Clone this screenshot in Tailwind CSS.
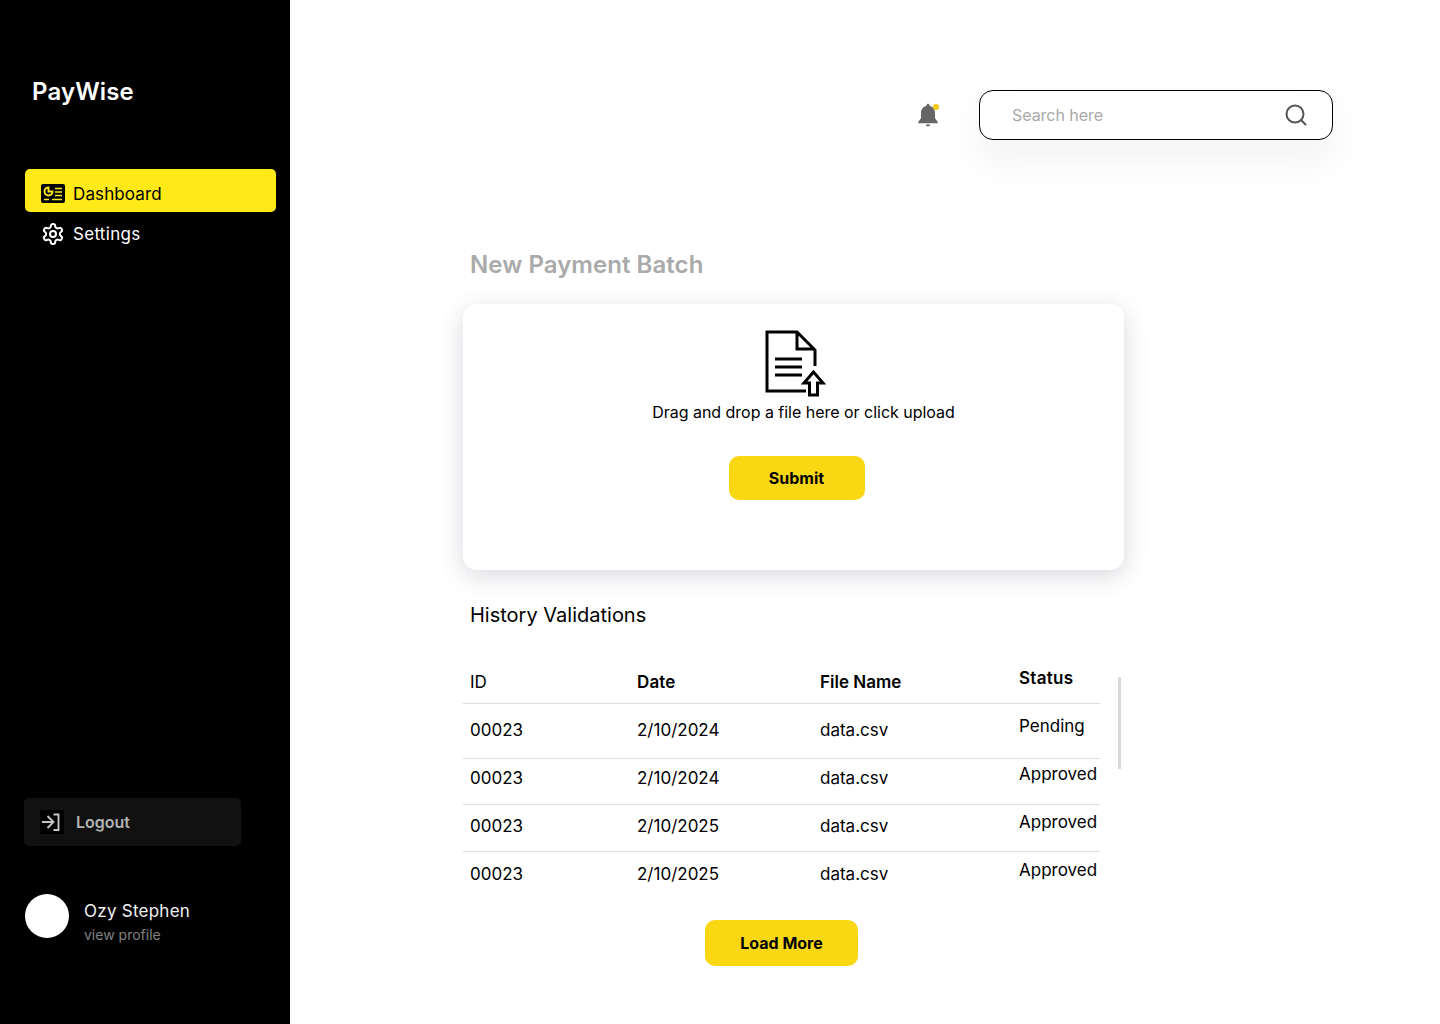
<!DOCTYPE html>
<html lang="en">
<head>
  <meta charset="UTF-8" />
  <title>PayWise | Dashboard</title>
  <script src="https://cdn.jsdelivr.net/npm/@tailwindcss/browser@4"></script>
</head>
<body class="bg-white font-['Inter',sans-serif] text-black">
<div class="flex h-[1024px] w-[1440px] overflow-hidden">

  <!-- Sidebar -->
  <aside class="w-[290px] shrink-0 bg-black flex flex-col text-white">
    <div class="pl-8 pt-[77px] h-[169px] text-2xl leading-[30px] font-semibold tracking-[0.15px]">PayWise</div>
    <nav class="pl-[25px] pr-[14px]">
      <a href="#" class="h-[43px] rounded-[5px] bg-[#ffe916] text-black flex items-center pl-4 gap-2 text-[17px] tracking-[0.12px]">
        <svg class="w-6 h-[19px] mt-[6px]" viewBox="0 0 24 19"><rect width="24" height="19" rx="2" fill="#000"/><path d="M7.500 3.500a4 4 0 1 0 4 4h-4z" fill="none" stroke="#ffe916" stroke-width="1.900"/><path d="M14 4.500h7M14 8h7M14 11.500h7M3 15.500h5M11 15.500h10" stroke="#ffe916" stroke-width="1.700" fill="none"/></svg>
        <span class="mt-[9px]">Dashboard</span>
      </a>
      <a href="#" class="h-[44px] flex items-center pl-4 gap-2 text-[17px] tracking-[0.3px]">
        <svg class="w-6 h-6" viewBox="0 0 24 24" fill="none" stroke="#fff" stroke-width="2" stroke-linecap="round" stroke-linejoin="round"><path d="M12.220 2h-.44a2 2 0 0 0-2 2v.18a2 2 0 0 1-1 1.730l-.43.25a2 2 0 0 1-2 0l-.15-.08a2 2 0 0 0-2.730.73l-.22.38a2 2 0 0 0 .73 2.730l.15.1a2 2 0 0 1 1 1.720v.51a2 2 0 0 1-1 1.740l-.15.09a2 2 0 0 0-.73 2.730l.22.38a2 2 0 0 0 2.730.73l.15-.08a2 2 0 0 1 2 0l.43.25a2 2 0 0 1 1 1.730V20a2 2 0 0 0 2 2h.44a2 2 0 0 0 2-2v-.18a2 2 0 0 1 1-1.730l.43-.25a2 2 0 0 1 2 0l.15.08a2 2 0 0 0 2.730-.73l.22-.39a2 2 0 0 0-.73-2.730l-.15-.08a2 2 0 0 1-1-1.740v-.5a2 2 0 0 1 1-1.740l.15-.09a2 2 0 0 0 .73-2.730l-.22-.38a2 2 0 0 0-2.730-.73l-.15.08a2 2 0 0 1-2 0l-.43-.25a2 2 0 0 1-1-1.730V4a2 2 0 0 0-2-2z"/><circle cx="12" cy="12" r="3"/></svg>
        <span class="mt-[2px]">Settings</span>
      </a>
    </nav>

    <div class="mt-auto pl-6 pb-[86px]">
      <a href="#" class="w-[217px] h-12 rounded-[5px] bg-[#111111] flex items-center pl-4 gap-3 text-[#b3b3b3] text-base font-semibold">
        <span class="w-6 h-6 bg-black">
          <svg class="w-6 h-6" viewBox="0 0 24 24" fill="none" stroke="#c4c4c4" stroke-width="1.900"><path d="M2 12h11.500M7.500 6l6 6-6 6M13.500 4.500h5v15.500h-5"/></svg>
        </span>
        Logout
      </a>
      <div class="mt-[48px] h-11 flex items-start pl-px">
        <div class="w-11 h-11 rounded-full bg-white"></div>
        <div class="ml-[15px] mt-[6px]">
          <div class="text-[17px] leading-[22px] tracking-[0.25px] text-[#f2f2f2]">Ozy Stephen</div>
          <div class="mt-[3px] text-sm leading-5 text-[#808080]">view profile</div>
        </div>
      </div>
    </div>
  </aside>

  <!-- Main -->
  <main class="flex-1 pl-[173px]">
    <!-- Top bar -->
    <div class="pt-[90px] flex items-center justify-end pr-[107px]">
      <div class="relative mr-[38px] w-[26px] h-[26px]">
        <svg class="w-[26px] h-[26px]" viewBox="0 0 24 24" fill="#666666"><path d="M12 1.500c-.8 0-1.400.6-1.400 1.400v.6C7.400 4.200 5.500 7 5.500 10.200v4.800L3 18.500v1.200h18v-1.200L18.500 15v-4.800c0-3.200-1.900-6-5.100-6.700v-.6c0-.8-.6-1.400-1.400-1.400zM10 20.700c0 1 .9 1.800 2 1.800s2-.8 2-1.800z"/></svg>
        <span class="absolute right-[2px] top-[2px] w-[6px] h-[6px] rounded-full bg-[#f5c70a]"></span>
      </div>
      <div class="w-[354px] h-[50px] rounded-[14px] border border-black bg-white flex items-center justify-between pl-[32px] pr-[25px] shadow-[0_20px_40px_rgba(60,40,70,0.06)]">
        <span class="text-base tracking-[-0.05px] text-[#a9a9a9]">Search here</span>
        <svg class="w-[22px] h-[22px]" viewBox="0 0 22 22" fill="none" stroke="#555555" stroke-width="2" stroke-linecap="round"><circle cx="10" cy="10" r="8.500"/><path d="M16.500 16.500l4 4"/></svg>
      </div>
    </div>

    <h1 class="mt-[109px] pl-[7px] text-2xl leading-8 font-semibold tracking-[0.05px] text-[#aaaaaa]">New Payment Batch</h1>

    <!-- Upload card -->
    <section class="mt-[23px] w-[661px] h-[266px] rounded-[14px] bg-white shadow-[0_6px_24px_rgba(60,70,90,0.2)] flex flex-col items-center pt-[26px]">
      <svg class="ml-[3px] w-[62px] h-[68px]" viewBox="0 0 62 68" fill="none" stroke="#000" stroke-width="3">
        <path d="M51 36V20L33 2H3v59h39M33 2v17h18M11 29h27M11 37h27M11 45h27"/>
        <path d="M49.500 42L40 53h5.500v12h8V53H59z"/>
      </svg>
      <p class="ml-5 mt-[2px] text-base tracking-[-0.02px] leading-6">Drag and drop a file here or click upload</p>
      <button class="mt-[32px] w-[136px] h-11 mr-[-6px] rounded-[10px] bg-[#f9d713] text-base font-bold">Submit</button>
    </section>

    <h2 class="mt-[31px] pl-[7px] text-xl leading-7 font-normal">History Validations</h2>

    <!-- Table -->
    <div class="relative w-[637px] mt-[31px] text-[17px]">
      <div class="grid grid-cols-[167px_183px_199px_1fr] pl-[7px] h-[44px] items-center border-b border-[#dddddd]">
        <div class="mt-[2px]">ID</div>
        <div class="mt-[2px] font-semibold tracking-[0.1px]">Date</div>
        <div class="mt-[2px] font-semibold">File Name</div>
        <div class="mt-[-6px] font-semibold tracking-[0.3px]">Status</div>
      </div>
      <div class="grid grid-cols-[167px_183px_199px_1fr] pl-[7px] h-[55px] items-center border-b border-[#dddddd]">
        <div>00023</div><div>2/10/2024</div><div>data.csv</div><div class="mt-[-8px]">Pending</div>
      </div>
      <div class="grid grid-cols-[167px_183px_199px_1fr] pl-[7px] h-[46px] items-center border-b border-[#dddddd]">
        <div class="mt-[-6px]">00023</div><div class="mt-[-6px]">2/10/2024</div><div class="mt-[-6px]">data.csv</div><div class="mt-[-14px]">Approved</div>
      </div>
      <div class="grid grid-cols-[167px_183px_199px_1fr] pl-[7px] h-[47px] items-center border-b border-[#dddddd]">
        <div class="mt-[-2px]">00023</div><div class="mt-[-2px]">2/10/2025</div><div class="mt-[-2px]">data.csv</div><div class="mt-[-10px]">Approved</div>
      </div>
      <div class="grid grid-cols-[167px_183px_199px_1fr] pl-[7px] h-[44px] items-center">
        <div class="mt-[2px]">00023</div><div class="mt-[2px]">2/10/2025</div><div class="mt-[2px]">data.csv</div><div class="mt-[-6px]">Approved</div>
      </div>
      <div class="absolute left-[655px] top-[17px] w-[3px] h-[92px] bg-[#d9d9d9]"></div>
    </div>

    <div class="mt-[24px] ml-[242px]">
      <button class="w-[153px] h-[46px] rounded-[10px] bg-[#f9d713] text-base font-bold">Load More</button>
    </div>
  </main>
</div>
</body>
</html>
